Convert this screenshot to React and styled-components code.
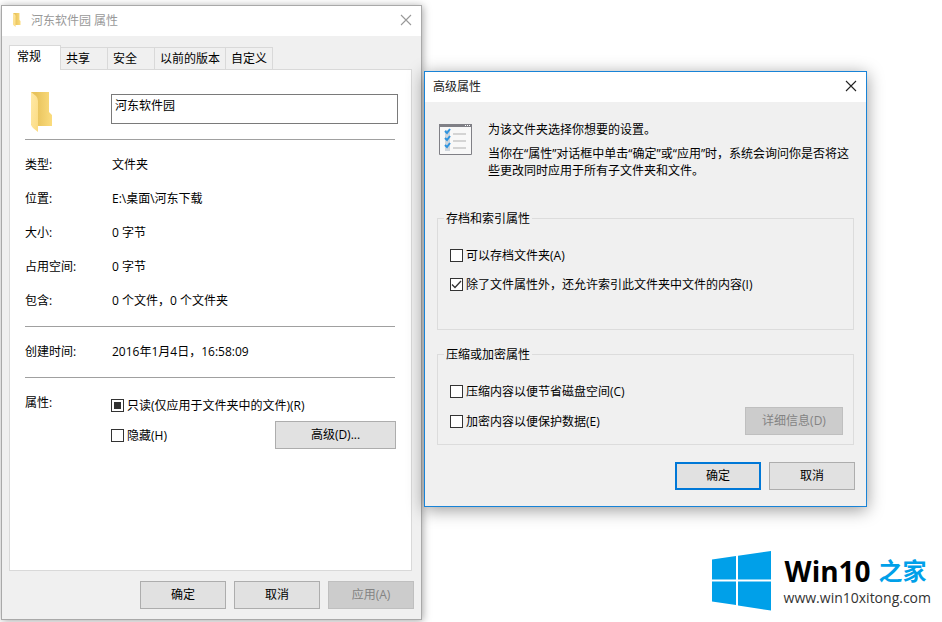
import React, { useEffect, useRef } from 'react';
import styled, { createGlobalStyle } from 'styled-components';

const GlobalStyle = createGlobalStyle`
  * {
    box-sizing: border-box;
  }

  body {
    margin: 0;
    background: #ffffff;
    color: #000000;
    font-family: "Open Sans", "Noto Sans CJK SC", sans-serif;
    font-size: 12px;
    line-height: 17px;
  }

  button, input {
    font: inherit;
  }
`;

const Desktop = styled.main`
  display: grid;
  grid-template-columns: minmax(0, 421fr) minmax(0, 518fr);
  column-gap: 2px;
  min-height: 100vh;
  padding: 5px 0 2px 1px;
`;

const RightSide = styled.div`
  display: flex;
  flex-direction: column;
  padding-top: 66px;
`;

const Window = styled.section`
  display: flex;
  flex-direction: column;
  background: #f0f0f0;
  border: 1px solid ${props => props.$active ? '#1883d7' : '#a9a9a9'};
  box-shadow: ${props => props.$active
    ? '0 3px 16px rgba(0, 0, 0, 0.4)'
    : '1px 1px 8px rgba(0, 0, 0, 0.35)'};
`;

const AdvancedWindow = styled(Window)`
  margin-right: 75px;
`;

const TitleBar = styled.header`
  display: flex;
  align-items: center;
  height: 30px;
  padding: 0 9px 2px 8px;
  background: #ffffff;
  color: ${props => props.$active ? '#222222' : '#999999'};
`;

const Title = styled.h1`
  flex: 1;
  margin: 0;
  font-size: 12px;
  font-weight: 400;
`;

const TitleIcon = styled.span`
  display: flex;
  width: 21px;
  padding-left: 2px;
`;

const CloseButton = styled.button`
  display: flex;
  padding: 0;
  border: none;
  background: none;
  color: inherit;
`;

const TabList = styled.div`
  display: flex;
  align-items: flex-end;
  padding: 9px 7px 0;
`;

const Tab = styled.button`
  height: 22px;
  padding: 0 5px;
  border: 1px solid #d9d9d9;
  border-left: none;
  border-bottom: none;
  background: #f0f0f0;
  color: #000000;
  text-align: left;
  min-width: 47px;

  &[aria-selected='true'] {
    position: relative;
    width: 52px;
    height: 25px;
    margin-bottom: -1px;
    padding: 0 6px 3px 7px;
    border-left: 1px solid #d9d9d9;
    background: #ffffff;
  }
`;

const Panel = styled.div`
  flex: 1;
  margin: 0 9px 0 7px;
  padding: 22px 13px 20px 15px;
  border: 1px solid #d9d9d9;
  background: #ffffff;
`;

const NameRow = styled.div`
  display: grid;
  grid-template-columns: 86px 1fr;
  align-items: start;
  height: 40px;
`;

const FolderCell = styled.span`
  display: flex;
  padding-left: 6px;
`;

const NameInput = styled.input`
  width: 100%;
  height: 30px;
  margin-top: 2px;
  padding: 0 3px 8px;
  border: 1px solid #7a7a7a;
  border-radius: 0;
  background: #ffffff;
  color: #000000;
  outline: none;
`;

const Divider = styled.hr`
  height: 1px;
  margin: ${props => props.$first ? '7px' : '8px'} 3px 8px 0;
  border: none;
  background: #a0a0a0;
`;

const Details = styled.dl`
  margin: 0;
`;

const DetailRow = styled.div`
  display: grid;
  grid-template-columns: 87px 1fr;
  align-items: center;
  min-height: 34px;
  padding-bottom: 2px;
`;

const Term = styled.dt`
  margin: 0;
`;

const Value = styled.dd`
  margin: 0;
`;

const AttributeRow = styled.div`
  display: grid;
  grid-template-columns: 86px 1fr;
`;

const AttributeLabel = styled.span`
  padding-top: 8px;
`;

const OptionList = styled.div`
  display: flex;
  flex-direction: column;
  gap: ${props => props.$gap || '0'};
  padding: ${props => props.$padding || '0'};
`;

const OptionRow = styled.div`
  display: flex;
  justify-content: space-between;
  align-items: flex-start;
  min-height: 29px;
`;

const OptionLabel = styled.label`
  display: flex;
  align-items: center;
  gap: 3px;
  height: 29px;
`;

const BoxHolder = styled.span`
  display: grid;
  place-items: center;

  & > * {
    grid-area: 1 / 1;
  }

  svg {
    pointer-events: none;
  }
`;

const Box = styled.input`
  appearance: none;
  display: grid;
  place-items: center;
  width: 13px;
  height: 13px;
  margin: 0;
  border: 1px solid #333333;
  background: #ffffff;

  &:indeterminate::after {
    content: '';
    width: 7px;
    height: 7px;
    background: #333333;
  }

  & + svg {
    visibility: hidden;
  }

  &:checked + svg {
    visibility: visible;
  }
`;

const PushButton = styled.button`
  width: ${props => props.$width || '86px'};
  height: 28px;
  padding: 0 0 2px;
  border: ${props => props.$primary ? '2px solid #0078d7' : '1px solid #adadad'};
  background: #e1e1e1;
  color: #000000;

  &:disabled {
    border-color: #bfbfbf;
    background: #cccccc;
    color: #838383;
  }
`;

const AdvancedButton = styled(PushButton)`
  margin-right: 2px;
`;

const Footer = styled.footer`
  display: flex;
  justify-content: flex-end;
  gap: 8px;
  padding: ${props => props.$padding};
`;

const AdvancedBody = styled.div`
  padding: 19px 12px 0;
`;

const Intro = styled.div`
  display: flex;
  align-items: flex-start;
  gap: 16px;
  padding-left: 2px;
`;

const IntroIcon = styled.span`
  display: flex;
  flex: none;
  padding-top: 3px;
`;

const IntroText = styled.div`
  flex: 1;
`;

const Paragraph = styled.p`
  margin: 0 0 7px;

  &:last-child {
    margin-bottom: 0;
  }
`;

const Group = styled.fieldset`
  min-width: 0;
  margin: ${props => props.$top} 0 0;
  padding: 14px 10px ${props => props.$bottom} 6px;
  border: 1px solid #dcdcdc;
`;

const GroupTitle = styled.legend`
  padding: 0 2px;
`;

const Brand = styled.a`
  display: flex;
  align-items: center;
  align-self: flex-end;
  gap: 13px;
  margin: auto 11px 9px 0;
  color: #333333;
  text-decoration: none;
`;

const BrandText = styled.span`
  display: flex;
  flex-direction: column;
  padding-bottom: 2px;
`;

const BrandName = styled.span`
  display: flex;
  align-items: center;
  gap: 8px;
  padding-left: 1px;
  color: #000000;
  font-size: 28px;
  font-weight: 700;
  line-height: 34px;
`;

const BrandHome = styled.span`
  color: #00a0e9;
  font-size: 24px;
`;

const BrandUrl = styled.span`
  font-size: 14px;
  line-height: 19px;
`;

const CloseIcon = () => (
  <svg width="12" height="12" viewBox="0 0 12 12" fill="none" stroke="currentColor" strokeWidth="1.1">
    <path d="M1 1l10 10M11 1L1 11" />
  </svg>
);

const FolderIcon = ({ width, height }) => (
  <svg width={width} height={height} viewBox="0 0 22 40">
    <defs>
      <linearGradient id="folderBack" x1="0" x2="1">
        <stop offset="0.25" stopColor="#e8c35c" />
        <stop offset="1" stopColor="#fbdc7e" />
      </linearGradient>
      <linearGradient id="folderFlap" x1="0" x2="1" y1="0" y2="1">
        <stop offset="0" stopColor="#ffe9a6" />
        <stop offset="1" stopColor="#fbdb82" />
      </linearGradient>
    </defs>
    <path d="M0 0h18v20l3 3v11H5L0 33z" fill="url(#folderBack)" />
    <path d="M0 0l5 4q2 2 2 5v31l-5-4q-2-2-2-4z" fill="url(#folderFlap)" />
  </svg>
);

const ChecklistIcon = () => (
  <svg width="33" height="31" viewBox="0 0 33 31">
    <path d="M.5.5h32v30H.5z" fill="#f8f8f8" stroke="#808086" />
    <path d="M0 0h33v3H0z" fill="#808086" />
    <path d="M26 1.5h1M28 1.5h1M30 1.5h1" stroke="#ffffff" />
    {[6, 13, 20].map(y => (
      <g key={y}>
        <path d={`M6 ${y}h5v7H6z`} fill="#cfd6dd" />
        <path d={`M6 ${y + 1}l2 2 3-4`} fill="none" stroke="#2f94df" strokeWidth="2" />
        <path d={`M14 ${y + 4}h13`} stroke="#c9c9c9" strokeWidth="1.5" />
      </g>
    ))}
  </svg>
);

const WindowsLogo = () => (
  <svg width="59" height="60" viewBox="0 0 59 60" fill="#00a0e9">
    <path d="M0 8.500L24 5v23.500H0zM26 4.800L59 0v28.500H26zM0 30.500h24V54L0 50.500zM26 30.500h33V59.500L26 54.500z" />
  </svg>
);

const Option = ({ children, mixed, checked }) => {
  const box = useRef(null);

  useEffect(() => {
    box.current.indeterminate = Boolean(mixed);
  }, [mixed]);

  return (
    <OptionLabel>
      <BoxHolder>
        <Box ref={box} type="checkbox" defaultChecked={checked} />
        <svg width="13" height="13" viewBox="0 0 13 13" fill="none" stroke="#333333" strokeWidth="1.3">
          <path d="M2 6.500l3 3 6-6.500" />
        </svg>
      </BoxHolder>
      {children}
    </OptionLabel>
  );
};

const tabs = ['常规', '共享', '安全', '以前的版本', '自定义'];

const details = [
  ['类型:', '文件夹'],
  ['位置:', 'E:\\桌面\\河东下载'],
  ['大小:', '0 字节'],
  ['占用空间:', '0 字节'],
  ['包含:', '0 个文件，0 个文件夹'],
];

const PropertiesWindow = () => (
  <Window aria-label="河东软件园 属性">
    <TitleBar>
      <TitleIcon><FolderIcon width={10} height={14} /></TitleIcon>
      <Title>河东软件园 属性</Title>
      <CloseButton aria-label="关闭"><CloseIcon /></CloseButton>
    </TitleBar>
    <TabList role="tablist">
      {tabs.map((tab, index) => (
        <Tab key={tab} role="tab" aria-selected={index === 0}>{tab}</Tab>
      ))}
    </TabList>
    <Panel role="tabpanel" aria-label="常规">
      <NameRow>
        <FolderCell><FolderIcon width={22} height={40} /></FolderCell>
        <NameInput type="text" aria-label="名称" defaultValue="河东软件园" />
      </NameRow>
      <Divider $first />
      <Details>
        {details.map(([term, value]) => (
          <DetailRow key={term}>
            <Term>{term}</Term>
            <Value>{value}</Value>
          </DetailRow>
        ))}
      </Details>
      <Divider />
      <Details>
        <DetailRow>
          <Term>创建时间:</Term>
          <Value>2016年1月4日，16:58:09</Value>
        </DetailRow>
      </Details>
      <Divider />
      <AttributeRow role="group" aria-labelledby="attributes">
        <AttributeLabel id="attributes">属性:</AttributeLabel>
        <OptionList $gap="1px" $padding="5px 0 0">
          <OptionRow>
            <Option mixed>只读(仅应用于文件夹中的文件)(R)</Option>
          </OptionRow>
          <OptionRow>
            <Option>隐藏(H)</Option>
            <AdvancedButton $width="121px">高级(D)...</AdvancedButton>
          </OptionRow>
        </OptionList>
      </AttributeRow>
    </Panel>
    <Footer $padding="10px 7px">
      <PushButton>确定</PushButton>
      <PushButton>取消</PushButton>
      <PushButton disabled>应用(A)</PushButton>
    </Footer>
  </Window>
);

const AdvancedAttributes = () => (
  <AdvancedWindow $active role="dialog" aria-label="高级属性">
    <TitleBar $active>
      <Title>高级属性</Title>
      <CloseButton aria-label="关闭"><CloseIcon /></CloseButton>
    </TitleBar>
    <AdvancedBody>
      <Intro>
        <IntroIcon><ChecklistIcon /></IntroIcon>
        <IntroText>
          <Paragraph>为该文件夹选择你想要的设置。</Paragraph>
          <Paragraph>
            当你在“属性”对话框中单击“确定”或“应用”时，系统会询问你是否将这些更改同时应用于所有子文件夹和文件。
          </Paragraph>
        </IntroText>
      </Intro>
      <Group $top="31px" $bottom="30px">
        <GroupTitle>存档和索引属性</GroupTitle>
        <OptionList $padding="0 0 0 6px">
          <OptionRow>
            <Option>可以存档文件夹(A)</Option>
          </OptionRow>
          <OptionRow>
            <Option checked>除了文件属性外，还允许索引此文件夹中文件的内容(I)</Option>
          </OptionRow>
        </OptionList>
      </Group>
      <Group $top="16px" $bottom="8px">
        <GroupTitle>压缩或加密属性</GroupTitle>
        <OptionList $gap="1px" $padding="0 0 0 6px">
          <OptionRow>
            <Option>压缩内容以便节省磁盘空间(C)</Option>
          </OptionRow>
          <OptionRow>
            <Option>加密内容以便保护数据(E)</Option>
            <PushButton $width="98px" disabled>详细信息(D)</PushButton>
          </OptionRow>
        </OptionList>
      </Group>
    </AdvancedBody>
    <Footer $padding="17px 11px 16px">
      <PushButton $primary>确定</PushButton>
      <PushButton>取消</PushButton>
    </Footer>
  </AdvancedWindow>
);

const App = () => (
  <>
    <GlobalStyle />
    <Desktop>
      <PropertiesWindow />
      <RightSide>
        <AdvancedAttributes />
        <Brand href="#">
          <WindowsLogo />
          <BrandText>
            <BrandName>Win10<BrandHome>之家</BrandHome></BrandName>
            <BrandUrl>www.win10xitong.com</BrandUrl>
          </BrandText>
        </Brand>
      </RightSide>
    </Desktop>
  </>
);

export default App;
